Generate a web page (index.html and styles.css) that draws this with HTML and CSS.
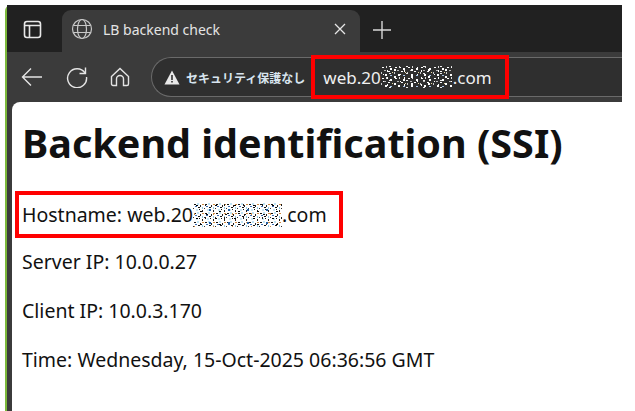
FILE: index.html
```html
<!DOCTYPE html>
<html>

<head>
    <title>LB backend check</title>
    <link rel="stylesheet" href="styles.css">
</head>

<body>
    <div class="window">
        <div class="tabstrip">
            <div class="sidebar-btn">
                <svg width="20" height="20" viewBox="0 0 20 20" fill="none" stroke="#e8e8e8" stroke-width="1.6">
                    <rect x="1.500" y="1.500" width="16" height="16" rx="2.500"/>
                    <path d="M1.500 5.500h16M6.500 5.500v12"/>
                </svg>
            </div>
            <div class="tab">
                <svg width="22" height="22" viewBox="0 0 22 22" fill="none" stroke="#c8c8c8" stroke-width="1.2">
                    <circle cx="11" cy="11" r="9.5"/>
                    <ellipse cx="11" cy="11" rx="4.5" ry="9.5"/>
                    <path d="M2.500 7.500h17M2.500 14.500h17"/>
                </svg>
                <span class="tab-title">LB backend check</span>
                <svg class="tab-close" width="12" height="12" viewBox="0 0 12 12" stroke="#e6e6e6" stroke-width="1.3">
                    <path d="M1 1l10 10M11 1L1 11"/>
                </svg>
            </div>
            <svg class="new-tab" width="18" height="18" viewBox="0 0 18 18" stroke="#d8d8d8" stroke-width="1.4">
                <path d="M9 0v18M0 9h18"/>
            </svg>
        </div>

        <div class="toolbar">
            <svg class="nav-icon" width="22" height="20" viewBox="0 0 22 20" fill="none" stroke="#e4e4e4" stroke-width="1.4">
                <path d="M21 10H1.500M10 1.500L1.500 10l8.500 8.500"/>
            </svg>
            <svg class="nav-icon" width="22" height="22" viewBox="0 0 22 22" fill="none" stroke="#e4e4e4" stroke-width="1.4">
                <path d="M19 7A9.500 9.500 0 1 0 20.500 11"/>
                <path d="M19.500 1.500V7.500H13.500"/>
            </svg>
            <svg class="nav-icon" width="20" height="20" viewBox="0 0 20 20" fill="none" stroke="#e4e4e4" stroke-width="1.4">
                <path d="M1.500 9.500L10 1.500l8.500 8V17a1.500 1.500 0 0 1-1.500 1.500h-3.500V12a3.500 3.500 0 0 0-7 0v6.500H3A1.500 1.500 0 0 1 1.500 17z"/>
            </svg>
            <div class="address">
                <svg class="warn" width="16" height="15" viewBox="0 0 16 15">
                    <path d="M8 0.500L15.500 14.500H0.500z" fill="#e8e8e8"/>
                    <path d="M7.200 5h1.600v5H7.200zM7.200 11h1.600v1.600H7.200z" fill="#2f2f2f"/>
                </svg>
                <span class="security">セキュリティ保護なし</span>
                <div class="url-box">
                    <span>web.20</span><svg class="mask" width="72" height="22"><rect width="72" height="22" fill="url(#noiseLight)"/><rect width="72" height="22" fill="url(#noiseLight2)"/></svg><span>.com</span>
                </div>
            </div>
        </div>

        <div class="page">
            <h1>Backend identification (SSI)</h1>
            <p class="hostname">Hostname: web.20<svg class="mask" width="89" height="24"><rect width="89" height="24" fill="url(#noiseDark)"/><rect width="89" height="24" fill="url(#noiseDark2)"/></svg>.com</p>
            <p>Server IP: 10.0.0.27</p>
            <p>Client IP: 10.0.3.170</p>
            <p>Time: Wednesday, 15-Oct-2025 06:36:56 GMT</p>
        </div>
    </div>

    <svg width="0" height="0" class="defs">
        <defs>
            <pattern id="noiseLight" width="13" height="11" patternUnits="userSpaceOnUse">
                <rect x="1" y="1" width="2" height="1" fill="#fff"/>
                <rect x="5" y="0" width="1" height="2" fill="#ddd"/>
                <rect x="9" y="2" width="2" height="2" fill="#fff"/>
                <rect x="3" y="4" width="2" height="1" fill="#bbb"/>
                <rect x="7" y="5" width="2" height="1" fill="#fff"/>
                <rect x="0" y="6" width="1" height="2" fill="#ccc"/>
                <rect x="11" y="6" width="1" height="1" fill="#e8d9a0"/>
                <rect x="4" y="8" width="2" height="2" fill="#fff"/>
                <rect x="9" y="9" width="2" height="1" fill="#a8c4e8"/>
            </pattern>
            <pattern id="noiseLight2" width="17" height="7" patternUnits="userSpaceOnUse">
                <rect x="2" y="1" width="1" height="1" fill="#fff"/>
                <rect x="8" y="0" width="2" height="1" fill="#eee"/>
                <rect x="13" y="3" width="2" height="2" fill="#fff"/>
                <rect x="6" y="4" width="1" height="2" fill="#fff"/>
            </pattern>
            <pattern id="noiseDark" width="11" height="9" patternUnits="userSpaceOnUse">
                <rect x="1" y="1" width="2" height="1" fill="#111"/>
                <rect x="4" y="0" width="2" height="2" fill="#bfe4f5"/>
                <rect x="7" y="2" width="1" height="2" fill="#222"/>
                <rect x="9" y="1" width="2" height="1" fill="#d08a40"/>
                <rect x="2" y="3" width="2" height="1" fill="#3a70b8"/>
                <rect x="5" y="4" width="2" height="1" fill="#111"/>
                <rect x="9" y="4" width="1" height="2" fill="#8fcbe6"/>
                <rect x="0" y="5" width="1" height="1" fill="#333"/>
                <rect x="3" y="6" width="2" height="2" fill="#c8e8f5"/>
                <rect x="6" y="6" width="1" height="1" fill="#111"/>
                <rect x="9" y="7" width="1" height="2" fill="#222"/>
            </pattern>
            <pattern id="noiseDark2" width="19" height="13" patternUnits="userSpaceOnUse">
                <rect x="3" y="2" width="2" height="1" fill="#000"/>
                <rect x="12" y="1" width="1" height="2" fill="#1c1c1c"/>
                <rect x="16" y="6" width="2" height="2" fill="#1f5fa8"/>
                <rect x="7" y="8" width="2" height="1" fill="#000"/>
                <rect x="1" y="10" width="1" height="2" fill="#d08a40"/>
                <rect x="13" y="11" width="2" height="1" fill="#111"/>
            </pattern>
        </defs>
    </svg>
</body>
</html>
```

FILE: styles.css
```css
html,
body {
    margin: 0;
    padding: 0;
    background-color: #fff;
}

body {
    width: 635px;
    height: 411px;
    overflow: hidden;
    font-family: "Noto Sans", sans-serif;
}

.defs {
    display: block;
}

.window {
    width: 615px;
    height: 406px;
    margin: 5px 0 0 5px;
    border-left: 2px solid #7cb83c;
    background-color: #3b3b3b;
    display: flex;
    flex-direction: column;
    border-top-left-radius: 6px;
}

.tabstrip {
    height: 47px;
    flex: none;
    background-color: #212121;
    display: flex;
    align-items: flex-end;
}

.sidebar-btn {
    width: 55px;
    height: 47px;
    display: flex;
    align-items: center;
    justify-content: center;
    box-sizing: border-box;
    padding: 2px 4px 0 0;
}

.tab {
    width: 298px;
    height: 42px;
    background-color: #3b3b3b;
    border-radius: 9px 9px 0 0;
    display: flex;
    align-items: center;
    padding: 0 0 4px 9px;
    box-sizing: border-box;
}

.tab-title {
    margin-left: 10px;
    font-size: 14px;
    color: #e4e4e4;
}

.tab-close {
    margin-left: auto;
    margin-right: 14px;
}

.new-tab {
    margin: 0 0 13px 13px;
}

.toolbar {
    height: 50px;
    flex: none;
    display: flex;
    align-items: center;
    background-color: #3b3b3b;
}

.nav-icon {
    flex: none;
}

.nav-icon:nth-child(1) {
    margin-left: 14px;
}

.nav-icon:nth-child(2) {
    margin-left: 23px;
}

.nav-icon:nth-child(3) {
    margin-left: 22px;
}

.address {
    flex: 1;
    height: 40px;
    margin-left: 21px;
    box-sizing: border-box;
    border: 1px solid #6a6a6a;
    border-right: none;
    border-radius: 20px 0 0 20px;
    background-color: #2f2f2f;
    display: flex;
    align-items: center;
    padding-left: 12px;
    color: #f0f0f0;
}

.warn {
    flex: none;
}

.security {
    margin-left: 6px;
    font-family: "Noto Sans CJK JP", "Noto Sans", sans-serif;
    font-weight: 700;
    font-size: 12px;
    color: #d8e4ee;
    white-space: nowrap;
}

.url-box {
    flex: none;
    width: 198px;
    height: 44px;
    margin-left: 6px;
    box-sizing: border-box;
    border: 4px solid #f00;
    display: flex;
    align-items: center;
    padding-left: 8px;
    font-size: 17px;
    white-space: nowrap;
}

.mask {
    flex: none;
}

.page {
    flex: 1;
    margin-left: 5px;
    background-color: #fff;
    border-top-left-radius: 8px;
    padding: 0 10px;
    color: #111;
}

.page h1 {
    margin: 14px 0 0;
    font-size: 39.5px;
    line-height: 54px;
    font-weight: 700;
    color: #111;
}

.page p {
    margin: 0 0 25px;
    font-size: 19.5px;
    line-height: 24px;
}

.page .hostname {
    width: 328px;
    height: 47px;
    box-sizing: border-box;
    margin: 21px 0 12px -7px;
    padding-left: 3px;
    border: 4px solid #f00;
    display: flex;
    align-items: center;
    white-space: nowrap;
}
```
